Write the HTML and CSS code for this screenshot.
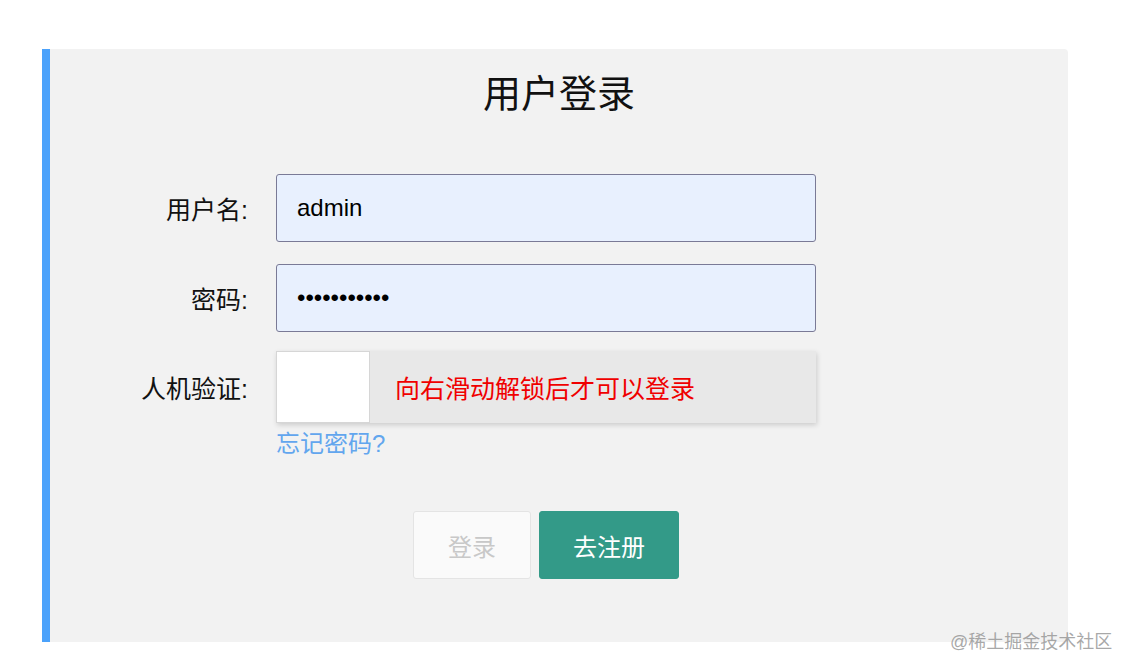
FILE: index.html
```html
<!DOCTYPE html>
<html lang="zh-CN">
<head>
<meta charset="utf-8">
<title>用户登录</title>
<link rel="stylesheet" href="styles.css">
</head>
<body>
<div class="card">
  <h1 class="title">用户登录</h1>
  <form class="form">
    <div class="row row-user">
      <label class="label" for="u">用户名:</label>
      <input class="input" id="u" type="text" value="admin">
    </div>
    <div class="row row-pass">
      <label class="label" for="p">密码:</label>
      <input class="input" id="p" type="password" value="12345678901">
    </div>
    <div class="row">
      <span class="label">人机验证:</span>
      <div class="slider">
        <div class="handle"></div>
        <span class="slider-text">向右滑动解锁后才可以登录</span>
      </div>
    </div>
    <div class="row">
      <span class="label"></span>
      <a class="forgot" href="#">忘记密码?</a>
    </div>
    <div class="row">
      <span class="label"></span>
      <div class="buttons">
        <button class="btn btn-login" type="button" disabled>登录</button>
        <button class="btn btn-register" type="button">去注册</button>
      </div>
    </div>
  </form>
</div>
<div class="watermark">@稀土掘金技术社区</div>
</body>
</html>
```
FILE: styles.css
```css
html, body {
  margin: 0;
  padding: 0;
  background: #ffffff;
  font-family: "Liberation Sans", "Noto Sans CJK SC", sans-serif;
}
body {
  padding: 49px 0 0 42px;
  width: 1130px;
  height: 670px;
  box-sizing: border-box;
  position: relative;
  overflow: hidden;
}
.card {
  width: 1026px;
  height: 593px;
  box-sizing: border-box;
  background: #f2f2f2;
  border-left: 8px solid #4ba2fb;
  border-radius: 0 4px 0 0;
  padding-top: 21px;
}
.title {
  margin: 0;
  font-size: 38px;
  font-weight: normal;
  line-height: 48px;
  text-align: center;
  color: #111;
}
.form {
  display: flex;
  flex-direction: column;
  margin-top: 56px;
}
.row {
  display: flex;
  align-items: center;
  gap: 28px;
}
.row-user {
  margin-bottom: 22px;
}
.row-pass {
  margin-bottom: 19px;
}
.label {
  flex: 0 0 198px;
  font-size: 25px;
  text-align: right;
  color: #111;
}
.input {
  box-sizing: border-box;
  width: 540px;
  height: 68px;
  border: 1px solid #7a7a96;
  border-radius: 3px;
  background: #e8f0fe;
  padding: 0 20px;
  font-family: "Liberation Sans", sans-serif;
  font-size: 24px;
  color: #000;
  outline: none;
}
.slider {
  width: 540px;
  height: 72px;
  background: #e8e8e8;
  display: flex;
  align-items: center;
  box-shadow: 1px 2px 5px rgba(0, 0, 0, 0.16);
}
.handle {
  width: 94px;
  height: 72px;
  box-sizing: border-box;
  background: #fff;
  border: 1px solid #d6d6d6;
}
.slider-text {
  margin-left: 25px;
  font-size: 25px;
  color: #f00000;
}
.forgot {
  margin-top: 6px;
  font-size: 24px;
  line-height: 30px;
  color: #62a6ee;
  text-decoration: none;
}
.buttons {
  width: 540px;
  display: flex;
  justify-content: center;
  gap: 8px;
  margin-top: 52px;
}
.btn {
  height: 68px;
  border-radius: 3px;
  font-family: "Liberation Sans", "Noto Sans CJK SC", sans-serif;
  font-size: 24px;
  cursor: pointer;
}
.btn-login {
  width: 118px;
  background: #fafafa;
  border: 1px solid #e4e4e4;
  color: #c8c8c8;
}
.btn-register {
  width: 140px;
  background: #339a88;
  border: 1px solid #339a88;
  color: #fff;
}
.watermark {
  position: absolute;
  left: 950px;
  top: 627px;
  font-size: 18px;
  color: rgba(140, 140, 140, 0.75);
}
```
